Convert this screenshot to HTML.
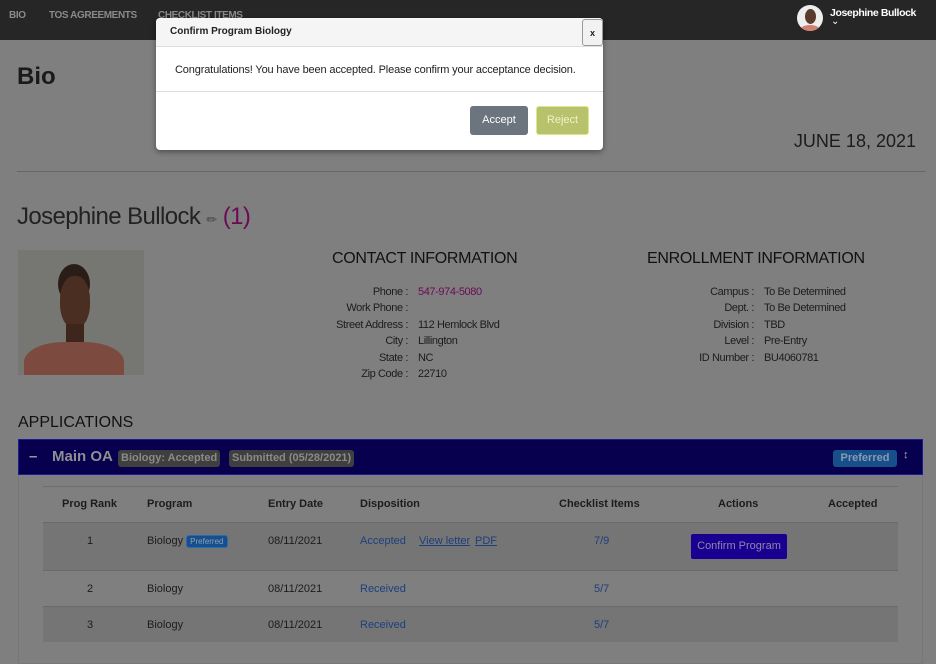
<!DOCTYPE html>
<html><head><meta charset="utf-8"><style>
*{box-sizing:border-box;margin:0;padding:0}
body{width:936px;height:658px;overflow:hidden;background:#7f7f7f;font-family:"Liberation Sans",sans-serif;color:#1c1c1c;position:relative}
.a{position:absolute;white-space:nowrap}
.nav{position:absolute;left:0;top:0;width:936px;height:40px;background:#262626}
.nav span{position:absolute;top:10px;font-size:10px;color:#8a8a8a;font-weight:bold;letter-spacing:-0.4px}
.lbl{position:absolute;font-size:11px;text-align:right;width:120px;letter-spacing:-0.4px}
.val{position:absolute;font-size:11px;letter-spacing:-0.4px}
.th{position:absolute;top:498px;font-size:11px;font-weight:bold;color:#1c1c1c}
.td{position:absolute;font-size:11px}
.lnk{color:#1d3f7e}
</style></head><body>
<div class="nav">
<span style="left:9px">BIO</span><span style="left:49px">TOS AGREEMENTS</span><span style="left:158px">CHECKLIST ITEMS</span>
<div class="a" style="left:797px;top:5px;width:26px;height:26px;border-radius:50%;background:#eee;overflow:hidden"><div style="position:absolute;left:8px;top:4px;width:11px;height:15px;border-radius:50%;background:#5a3a2a"></div><div style="position:absolute;left:3px;top:20px;width:20px;height:10px;border-radius:50%;background:#d08070"></div></div>
<div class="a" style="left:830px;top:7px;font-size:10.5px;font-weight:bold;color:#fff;letter-spacing:-0.4px">Josephine Bullock</div>
<div class="a" style="left:831px;top:16px;font-size:10px;color:#fff">&#8964;</div>
</div>
<div class="a" style="left:17px;top:63px;font-size:24px;font-weight:bold;color:#1a1a1a">Bio</div>
<div class="a" style="right:20px;top:131px;font-size:18px;color:#1c1c1c">JUNE 18, 2021</div>
<div class="a" style="left:17px;top:171px;width:909px;height:1px;background:#666"></div>
<div class="a" style="left:17px;top:203px;font-size:24px;color:#222;letter-spacing:-0.6px">Josephine Bullock <span style="font-size:13px;color:#444">&#9999;</span> <span style="color:#6b0a55">(1)</span></div>
<div class="a" style="left:18px;top:250px;width:126px;height:125px;background:#767673;overflow:hidden">
<div style="position:absolute;left:40px;top:14px;width:32px;height:40px;border-radius:50%;background:#2a1d18"></div>
<div style="position:absolute;left:42px;top:26px;width:30px;height:52px;border-radius:45%;background:#4a2e22"></div>
<div style="position:absolute;left:48px;top:74px;width:18px;height:22px;background:#3e261c"></div>
<div style="position:absolute;left:6px;top:92px;width:100px;height:50px;border-radius:40% 40% 0 0;background:#7d4a40"></div>
</div>
<div class="a" style="left:332px;top:250px;font-size:16px;color:#111;letter-spacing:-0.3px">CONTACT INFORMATION</div>
<div class="a" style="left:647px;top:250px;font-size:16px;color:#111;letter-spacing:-0.3px">ENROLLMENT INFORMATION</div>
<div class="lbl" style="left:288px;top:286px">Phone :</div><div class="val" style="left:418px;top:286px;color:#6b0a55">547-974-5080</div>
<div class="lbl" style="left:288px;top:302px">Work Phone :</div>
<div class="lbl" style="left:288px;top:319px">Street Address :</div><div class="val" style="left:418px;top:319px">112 Hemlock Blvd</div>
<div class="lbl" style="left:288px;top:335px">City :</div><div class="val" style="left:418px;top:335px">Lillington</div>
<div class="lbl" style="left:288px;top:352px">State :</div><div class="val" style="left:418px;top:352px">NC</div>
<div class="lbl" style="left:288px;top:368px">Zip Code :</div><div class="val" style="left:418px;top:368px">22710</div>
<div class="lbl" style="left:634px;top:286px">Campus :</div><div class="val" style="left:764px;top:286px">To Be Determined</div>
<div class="lbl" style="left:634px;top:302px">Dept. :</div><div class="val" style="left:764px;top:302px">To Be Determined</div>
<div class="lbl" style="left:634px;top:319px">Division :</div><div class="val" style="left:764px;top:319px">TBD</div>
<div class="lbl" style="left:634px;top:335px">Level :</div><div class="val" style="left:764px;top:335px">Pre-Entry</div>
<div class="lbl" style="left:634px;top:352px">ID Number :</div><div class="val" style="left:764px;top:352px">BU4060781</div>
<div class="a" style="left:18px;top:414px;font-size:16px;color:#111">APPLICATIONS</div>
<div class="a" style="left:18px;top:439px;width:905px;height:225px;border:1px solid #777"></div>
<div class="a" style="left:18px;top:439px;width:905px;height:36px;background:#07004f;border:1px solid #1a1a9a"></div>
<div class="a" style="left:29px;top:448px;font-size:15px;font-weight:bold;color:#999">&#8211;</div>
<div class="a" style="left:52px;top:448px;font-size:15px;font-weight:bold;color:#8f8f8f">Main OA</div>
<div class="a" style="left:118px;top:450px;height:17px;padding:0 3px;background:#3f3f3f;border-radius:3px;font-size:11px;font-weight:bold;color:#8a8a8a;line-height:17px">Biology: Accepted</div>
<div class="a" style="left:229px;top:450px;height:17px;padding:0 3px;background:#3f3f3f;border-radius:3px;font-size:11px;font-weight:bold;color:#8a8a8a;line-height:17px">Submitted (05/28/2021)</div>
<div class="a" style="left:833px;top:450px;width:64px;height:17px;background:#174f8a;border-radius:3px;font-size:11px;font-weight:bold;color:#8a9ab0;line-height:17px;text-align:center">Preferred</div>
<div class="a" style="left:903px;top:449px;font-size:11px;color:#aaa">&#8597;</div>
<div class="a" style="left:43px;top:486px;width:855px;height:1px;background:#6e6e6e"></div>
<div class="th" style="left:62px">Prog Rank</div><div class="th" style="left:147px">Program</div><div class="th" style="left:268px">Entry Date</div><div class="th" style="left:360px">Disposition</div><div class="th" style="left:559px">Checklist Items</div><div class="th" style="left:718px">Actions</div><div class="th" style="left:828px">Accepted</div>
<div class="a" style="left:43px;top:522px;width:855px;height:49px;background:#757575;border-top:1px solid #6a6a6a;border-bottom:1px solid #6a6a6a"></div>
<div class="a" style="left:43px;top:606px;width:855px;height:36px;background:#757575;border-top:1px solid #6a6a6a"></div>
<div class="td" style="left:87px;top:535px">1</div><div class="td" style="left:147px;top:535px">Biology <span style="display:inline-block;background:#174f8a;color:#8aa0c0;font-size:8px;padding:1px 3px;border-radius:3px;border:1px solid #2a6ab0">Preferred</span></div><div class="td" style="left:268px;top:535px">08/11/2021</div><div class="td lnk" style="left:360px;top:535px">Accepted</div><div class="td lnk" style="left:419px;top:535px;text-decoration:underline">View letter</div><div class="td lnk" style="left:475px;top:535px;text-decoration:underline">PDF</div><div class="td lnk" style="left:594px;top:535px">7/9</div>
<div class="a" style="left:691px;top:534px;width:96px;height:25px;background:#1a0090;border-radius:2px;font-size:11px;color:#8a8aa8;text-align:center;line-height:25px">Confirm Program</div>
<div class="td" style="left:87px;top:583px">2</div><div class="td" style="left:147px;top:583px">Biology</div><div class="td" style="left:268px;top:583px">08/11/2021</div><div class="td lnk" style="left:360px;top:583px">Received</div><div class="td lnk" style="left:594px;top:583px">5/7</div>
<div class="td" style="left:87px;top:619px">3</div><div class="td" style="left:147px;top:619px">Biology</div><div class="td" style="left:268px;top:619px">08/11/2021</div><div class="td lnk" style="left:360px;top:619px">Received</div><div class="td lnk" style="left:594px;top:619px">5/7</div>
<div class="a" style="left:156px;top:18px;width:447px;height:132px;background:#fff;border-radius:4px;box-shadow:0 2px 6px rgba(0,0,0,.4);overflow:hidden">
<div style="position:absolute;left:0;top:0;width:447px;height:29px;background:#f5f5f5;border-bottom:1px solid #ddd"></div>
<div class="a" style="left:14px;top:8px;font-size:10px;font-weight:bold;color:#222">Confirm Program Biology</div>
<div class="a" style="left:426px;top:1px;width:21px;height:27px;border:1px solid #999;border-radius:3px;background:#f2f2f2;font-size:9px;font-weight:bold;text-align:center;line-height:27px">x</div>
<div class="a" style="left:19px;top:46px;font-size:11px;color:#222;letter-spacing:-0.15px">Congratulations! You have been accepted. Please confirm your acceptance decision.</div>
<div style="position:absolute;left:0;top:73px;width:447px;height:1px;background:#ddd"></div>
<div class="a" style="left:314px;top:88px;width:58px;height:29px;background:#6c757d;border-radius:3px;color:#fff;font-size:11px;text-align:center;line-height:29px">Accept</div>
<div class="a" style="left:380px;top:88px;width:53px;height:29px;background:#b8c26c;border:1px solid #dde88a;border-radius:3px;color:#eef2c8;font-size:11px;text-align:center;line-height:27px">Reject</div>
</div>
</body></html>
